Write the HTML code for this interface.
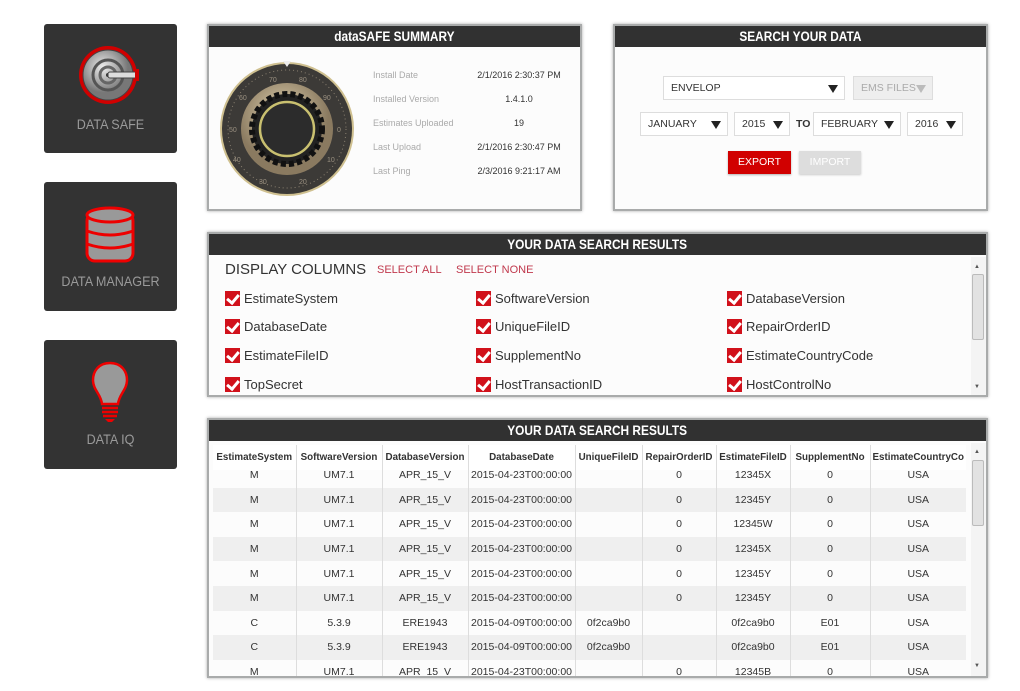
<!DOCTYPE html>
<html><head><meta charset="utf-8"><style>
*{margin:0;padding:0;box-sizing:border-box}
body{width:1020px;height:691px;background:#fff;font-family:"Liberation Sans",sans-serif;position:relative;overflow:hidden}
.a{position:absolute}
.tile{position:absolute;left:44px;width:133px;height:129px;background:#333;border-radius:3px;color:#9a9a9a;font-size:14px;text-align:center}
.tile span{position:absolute;left:0;right:0;transform:scaleX(.9)}
.panel{position:absolute;background:#fcfcfc;border:2px solid #a9abab;box-shadow:0 0 3px rgba(0,0,0,.35)}
.hd{position:absolute;left:0;right:0;top:0;height:21px;background:#313131;color:#fff;font-size:13.5px;font-weight:bold;text-align:center;line-height:21px}
.hd b{display:inline-block;transform:scaleX(.88)}
.lbl{position:absolute;left:164px;font-size:9px;color:#aaa}
.val{position:absolute;left:255px;width:110px;text-align:center;font-size:9px;color:#333}
.sel{position:absolute;height:24px;border:1px solid #ddd;background:#fff;font-size:10.5px;color:#333;line-height:22px;padding-left:7px}
.sel i{position:absolute;right:6px;top:8px;border-left:5px solid transparent;border-right:5px solid transparent;border-top:8px solid #222}
.cb{position:absolute;font-size:13px;color:#333}
.cb s{position:absolute;left:-19px;top:0;width:15px;height:15px;background:#d1111b;text-decoration:none}
.cb s:after{content:"";position:absolute;left:4px;top:1px;width:5px;height:9px;border-right:3px solid #fff;border-bottom:3px solid #fff;transform:rotate(40deg)}
table{border-collapse:collapse;font-size:10.5px;color:#333;table-layout:fixed}
td,th{text-align:center;border-left:1px solid #ddd;height:24.6px;padding:0;white-space:nowrap;overflow:hidden}
th{font-weight:bold;font-size:9.8px;height:25px}
tr.g td{background:#efefef}
</style></head><body>

<div class="tile" style="top:24px">
<svg class="a" style="left:33px;top:19px" width="70" height="64" viewBox="0 0 70 64">
<defs><radialGradient id="m" cx="40%" cy="35%"><stop offset="0" stop-color="#eee"/><stop offset="1" stop-color="#777"/></radialGradient></defs>
<circle cx="31" cy="32" r="29" fill="#d10000"/>
<circle cx="31" cy="32" r="25" fill="url(#m)" stroke="#444" stroke-width="1"/>
<circle cx="31" cy="32" r="15" fill="none" stroke="#555" stroke-width="3"/>
<circle cx="31" cy="32" r="8" fill="none" stroke="#666" stroke-width="3"/>
<circle cx="31" cy="32" r="2" fill="#333"/>
<rect x="31" y="29" width="29" height="6" rx="2" fill="#ddd" stroke="#444"/>
<rect x="58" y="26" width="4" height="12" fill="#d10000"/>
</svg><span style="top:92px">DATA SAFE</span></div>

<div class="tile" style="top:182px">
<svg class="a" style="left:40px;top:24px" width="52" height="60" viewBox="0 0 52 60">
<rect x="3" y="7" width="46" height="48" rx="8" fill="#999" stroke="#e00" stroke-width="3"/>
<ellipse cx="26" cy="9" rx="23" ry="7" fill="#999" stroke="#e00" stroke-width="3"/>
<path d="M3 25 Q26 33 49 25 M3 38 Q26 46 49 38" fill="none" stroke="#e00" stroke-width="3"/>
</svg><span style="top:91px">DATA MANAGER</span></div>

<div class="tile" style="top:340px">
<svg class="a" style="left:46px;top:20px" width="40" height="64" viewBox="0 0 40 64">
<path d="M20 3 C8 3 3 12 3 20 C3 30 11 34 12 44 L28 44 C29 34 37 30 37 20 C37 12 32 3 20 3Z" fill="#999" stroke="#e00" stroke-width="2.5"/>
<path d="M12 48 H28 M12 52 H28 M13 56 H27" stroke="#e00" stroke-width="2.5"/>
<path d="M15 59 H25 L22 62 H18Z" fill="#e00"/>
</svg><span style="top:91px">DATA IQ</span></div>

<div class="panel" style="left:207px;top:24px;width:375px;height:187px">
<div class="hd"><b>dataSAFE SUMMARY</b></div>
<svg class="a" style="left:10px;top:34px" width="136" height="136" viewBox="0 0 136 136">
<defs><radialGradient id="b" cx="45%" cy="35%"><stop offset="0" stop-color="#e0d2b0"/><stop offset="1" stop-color="#8a7a60"/></radialGradient></defs>
<circle cx="68" cy="69" r="67" fill="#cfc090"/>
<circle cx="68" cy="69" r="65" fill="#3c3a37"/>
<circle cx="68" cy="69" r="59" fill="none" stroke="#8a8070" stroke-width="1" stroke-dasharray="1 3"/>
<circle cx="68" cy="69" r="46" fill="url(#b)"/>
<circle cx="68" cy="69" r="35" fill="#222" stroke="#111" stroke-width="6" stroke-dasharray="5 3"/>
<circle cx="68" cy="69" r="27" fill="#2c2c2c" stroke="#c9c070" stroke-width="2.5"/>
<path d="M64 1 L72 1 L68 7Z" fill="#eee"/>
<g fill="#9a9080" font-size="7" font-family="Liberation Sans"><text x="50" y="22">70</text><text x="80" y="22">80</text><text x="104" y="40">90</text><text x="118" y="72">0</text><text x="20" y="40">60</text><text x="10" y="72">50</text><text x="14" y="102">40</text><text x="40" y="124">30</text><text x="80" y="124">20</text><text x="108" y="102">10</text></g>
</svg>
<div class="lbl" style="top:44px">Install Date</div><div class="val" style="top:44px">2/1/2016 2:30:37 PM</div>
<div class="lbl" style="top:68px">Installed Version</div><div class="val" style="top:68px">1.4.1.0</div>
<div class="lbl" style="top:92px">Estimates Uploaded</div><div class="val" style="top:92px">19</div>
<div class="lbl" style="top:116px">Last Upload</div><div class="val" style="top:116px">2/1/2016 2:30:47 PM</div>
<div class="lbl" style="top:140px">Last Ping</div><div class="val" style="top:140px">2/3/2016 9:21:17 AM</div>
</div>

<div class="panel" style="left:613px;top:24px;width:375px;height:187px">
<div class="hd"><b>SEARCH YOUR DATA</b></div>
<div class="sel" style="left:48px;top:50px;width:182px">ENVELOP<i></i></div>
<div class="sel" style="left:238px;top:50px;width:80px;background:#eee;color:#aaa">EMS FILES<i style="border-top-color:#bbb"></i></div>
<div class="sel" style="left:25px;top:86px;width:88px">JANUARY<i></i></div>
<div class="sel" style="left:119px;top:86px;width:56px">2015<i></i></div>
<div class="a" style="left:181px;top:92px;font-size:10.5px;font-weight:bold;color:#333">TO</div>
<div class="sel" style="left:198px;top:86px;width:88px">FEBRUARY<i></i></div>
<div class="sel" style="left:292px;top:86px;width:56px">2016<i></i></div>
<div class="a" style="left:113px;top:125px;width:63px;height:23px;background:#d10000;color:#fff;font-size:10.5px;text-align:center;line-height:23px;box-shadow:0 1px 2px rgba(0,0,0,.3)">EXPORT</div>
<div class="a" style="left:184px;top:125px;width:62px;height:23px;background:#ddd;color:#fff;font-size:10.5px;text-align:center;line-height:23px;box-shadow:0 1px 2px rgba(0,0,0,.2)">IMPORT</div>
</div>

<div class="panel" style="left:207px;top:232px;width:781px;height:165px">
<div class="hd"><b>YOUR DATA SEARCH RESULTS</b></div>
<div class="a" style="left:16px;top:27px;font-size:15px;color:#333">DISPLAY COLUMNS</div>
<div class="a" style="left:168px;top:30px;font-size:11px;color:#c0394d">SELECT ALL</div>
<div class="a" style="left:247px;top:30px;font-size:11px;color:#c0394d">SELECT NONE</div>
<div class="cb" style="left:35px;top:57px"><s></s>EstimateSystem</div>
<div class="cb" style="left:286px;top:57px"><s></s>SoftwareVersion</div>
<div class="cb" style="left:537px;top:57px"><s></s>DatabaseVersion</div>
<div class="cb" style="left:35px;top:85px"><s></s>DatabaseDate</div>
<div class="cb" style="left:286px;top:85px"><s></s>UniqueFileID</div>
<div class="cb" style="left:537px;top:85px"><s></s>RepairOrderID</div>
<div class="cb" style="left:35px;top:114px"><s></s>EstimateFileID</div>
<div class="cb" style="left:286px;top:114px"><s></s>SupplementNo</div>
<div class="cb" style="left:537px;top:114px"><s></s>EstimateCountryCode</div>
<div class="cb" style="left:35px;top:143px"><s></s>TopSecret</div>
<div class="cb" style="left:286px;top:143px"><s></s>HostTransactionID</div>
<div class="cb" style="left:537px;top:143px"><s></s>HostControlNo</div>
<div class="a" style="left:762px;top:23px;width:15px;height:138px;background:#f4f4f4"></div>
<div class="a" style="left:763px;top:40px;width:12px;height:66px;background:#e2e2e2;border:1px solid #bbb;border-radius:2px"></div>
<div class="a" style="left:765px;top:30px;font-size:6px;color:#555">▲</div>
<div class="a" style="left:765px;top:150px;font-size:6px;color:#555">▼</div>
</div>

<div class="panel" style="left:207px;top:418px;width:781px;height:260px">
<div class="hd"><b>YOUR DATA SEARCH RESULTS</b></div>
<div class="a" style="left:4px;top:25px;width:755px;height:231px;overflow:hidden">
<table style="width:753px;position:absolute;top:0;left:0;background:#fff">
<colgroup><col style="width:83px"><col style="width:86px"><col style="width:86px"><col style="width:107px"><col style="width:67px"><col style="width:74px"><col style="width:74px"><col style="width:80px"><col style="width:96px"></colgroup>
<tr><th style="border-left:0">EstimateSystem</th><th>SoftwareVersion</th><th>DatabaseVersion</th><th>DatabaseDate</th><th>UniqueFileID</th><th>RepairOrderID</th><th>EstimateFileID</th><th>SupplementNo</th><th>EstimateCountryCo</th></tr>
</table>
<div class="a" style="left:0;top:25px;width:753px;height:206px;overflow:hidden">
<table style="width:753px;position:absolute;top:-7px;left:0">
<colgroup><col style="width:83px"><col style="width:86px"><col style="width:86px"><col style="width:107px"><col style="width:67px"><col style="width:74px"><col style="width:74px"><col style="width:80px"><col style="width:96px"></colgroup>
<tr><td style="border-left:0">M</td><td>UM7.1</td><td>APR_15_V</td><td>2015-04-23T00:00:00</td><td></td><td>0</td><td>12345X</td><td>0</td><td>USA</td></tr>
<tr class="g"><td style="border-left:0">M</td><td>UM7.1</td><td>APR_15_V</td><td>2015-04-23T00:00:00</td><td></td><td>0</td><td>12345Y</td><td>0</td><td>USA</td></tr>
<tr><td style="border-left:0">M</td><td>UM7.1</td><td>APR_15_V</td><td>2015-04-23T00:00:00</td><td></td><td>0</td><td>12345W</td><td>0</td><td>USA</td></tr>
<tr class="g"><td style="border-left:0">M</td><td>UM7.1</td><td>APR_15_V</td><td>2015-04-23T00:00:00</td><td></td><td>0</td><td>12345X</td><td>0</td><td>USA</td></tr>
<tr><td style="border-left:0">M</td><td>UM7.1</td><td>APR_15_V</td><td>2015-04-23T00:00:00</td><td></td><td>0</td><td>12345Y</td><td>0</td><td>USA</td></tr>
<tr class="g"><td style="border-left:0">M</td><td>UM7.1</td><td>APR_15_V</td><td>2015-04-23T00:00:00</td><td></td><td>0</td><td>12345Y</td><td>0</td><td>USA</td></tr>
<tr><td style="border-left:0">C</td><td>5.3.9</td><td>ERE1943</td><td>2015-04-09T00:00:00</td><td>0f2ca9b0</td><td></td><td>0f2ca9b0</td><td>E01</td><td>USA</td></tr>
<tr class="g"><td style="border-left:0">C</td><td>5.3.9</td><td>ERE1943</td><td>2015-04-09T00:00:00</td><td>0f2ca9b0</td><td></td><td>0f2ca9b0</td><td>E01</td><td>USA</td></tr>
<tr><td style="border-left:0">M</td><td>UM7.1</td><td>APR_15_V</td><td>2015-04-23T00:00:00</td><td></td><td>0</td><td>12345B</td><td>0</td><td>USA</td></tr>
</table></div></div>
<div class="a" style="left:762px;top:23px;width:15px;height:233px;background:#f4f4f4"></div>
<div class="a" style="left:763px;top:40px;width:12px;height:66px;background:#e2e2e2;border:1px solid #bbb;border-radius:2px"></div>
<div class="a" style="left:765px;top:29px;font-size:6px;color:#555">▲</div>
<div class="a" style="left:765px;top:243px;font-size:6px;color:#555">▼</div>
</div>
</body></html>
